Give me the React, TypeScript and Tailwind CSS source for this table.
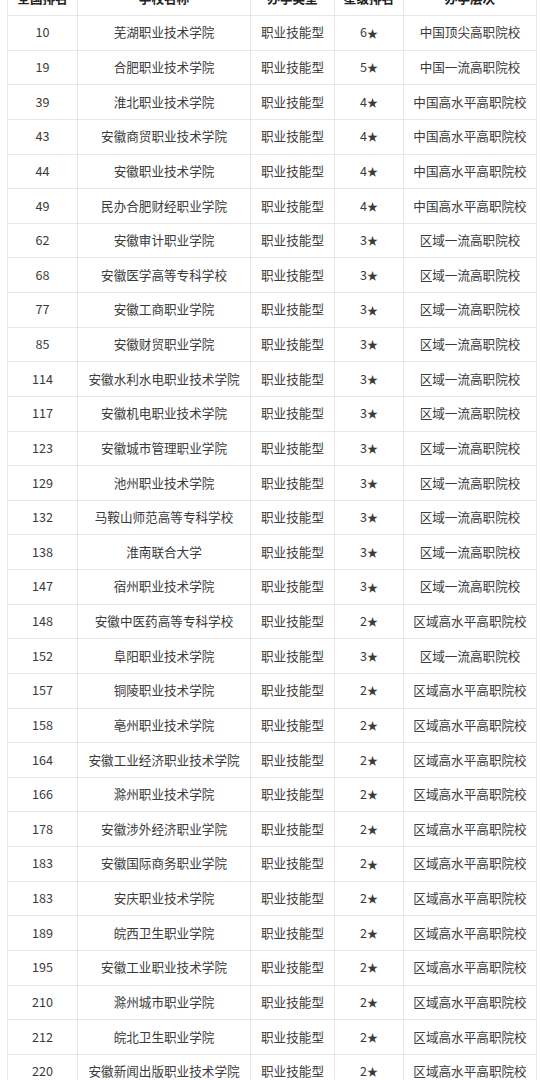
const rows: [string, string, string, string][] = [
  ['10', '芜湖职业技术学院', '6', '中国顶尖高职院校'],
  ['19', '合肥职业技术学院', '5', '中国一流高职院校'],
  ['39', '淮北职业技术学院', '4', '中国高水平高职院校'],
  ['43', '安徽商贸职业技术学院', '4', '中国高水平高职院校'],
  ['44', '安徽职业技术学院', '4', '中国高水平高职院校'],
  ['49', '民办合肥财经职业学院', '4', '中国高水平高职院校'],
  ['62', '安徽审计职业学院', '3', '区域一流高职院校'],
  ['68', '安徽医学高等专科学校', '3', '区域一流高职院校'],
  ['77', '安徽工商职业学院', '3', '区域一流高职院校'],
  ['85', '安徽财贸职业学院', '3', '区域一流高职院校'],
  ['114', '安徽水利水电职业技术学院', '3', '区域一流高职院校'],
  ['117', '安徽机电职业技术学院', '3', '区域一流高职院校'],
  ['123', '安徽城市管理职业学院', '3', '区域一流高职院校'],
  ['129', '池州职业技术学院', '3', '区域一流高职院校'],
  ['132', '马鞍山师范高等专科学校', '3', '区域一流高职院校'],
  ['138', '淮南联合大学', '3', '区域一流高职院校'],
  ['147', '宿州职业技术学院', '3', '区域一流高职院校'],
  ['148', '安徽中医药高等专科学校', '2', '区域高水平高职院校'],
  ['152', '阜阳职业技术学院', '3', '区域一流高职院校'],
  ['157', '铜陵职业技术学院', '2', '区域高水平高职院校'],
  ['158', '亳州职业技术学院', '2', '区域高水平高职院校'],
  ['164', '安徽工业经济职业技术学院', '2', '区域高水平高职院校'],
  ['166', '滁州职业技术学院', '2', '区域高水平高职院校'],
  ['178', '安徽涉外经济职业学院', '2', '区域高水平高职院校'],
  ['183', '安徽国际商务职业学院', '2', '区域高水平高职院校'],
  ['183', '安庆职业技术学院', '2', '区域高水平高职院校'],
  ['189', '皖西卫生职业学院', '2', '区域高水平高职院校'],
  ['195', '安徽工业职业技术学院', '2', '区域高水平高职院校'],
  ['210', '滁州城市职业学院', '2', '区域高水平高职院校'],
  ['212', '皖北卫生职业学院', '2', '区域高水平高职院校'],
  ['220', '安徽新闻出版职业技术学院', '2', '区域高水平高职院校'],
];

const cols = 'grid grid-cols-[70px_173px_84px_69px_133px]';
const cell = 'flex h-[34.63px] items-center justify-center border-r border-b border-[#e6e6e6] whitespace-nowrap';

export default function App() {
  return (
    <div
      className="h-[1080px] w-[540px] overflow-hidden bg-white text-[12.6px] text-[#3a3a3a]"
      style={{ fontFamily: '"Noto Sans CJK SC", "Noto Sans", sans-serif' }}
    >
      <div className="ml-[7px] -mt-[18.6px] w-[529px] border-l border-[#e6e6e6]">
        <div className={`${cols} font-bold text-[#222]`}>
          <div className={cell}>全国排名</div>
          <div className={cell}>学校名称</div>
          <div className={cell}>办学类型</div>
          <div className={cell}>星级排名</div>
          <div className={cell}>办学层次</div>
        </div>
        {rows.map(([rank, name, star, level], i) => (
          <div key={i} className={cols}>
            <div className={cell}>{rank}</div>
            <div className={cell}>{name}</div>
            <div className={cell}>职业技能型</div>
            <div className={cell}>
              {star}
              <span className="text-[11px]">★</span>
            </div>
            <div className={cell}>{level}</div>
          </div>
        ))}
      </div>
    </div>
  );
}
